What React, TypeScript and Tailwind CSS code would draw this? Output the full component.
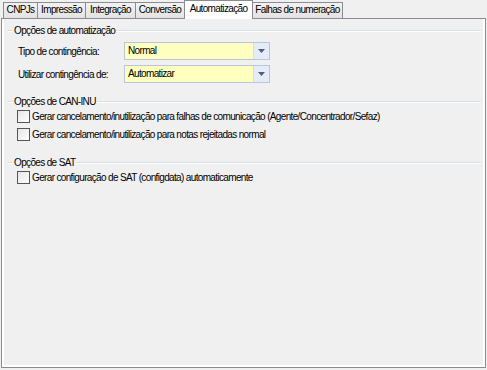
import React from 'react';

const tabs = [
    { t: "CNPJs", w: "w-[35px]" },
    { t: "Impressão", w: "w-[49px]" },
    { t: "Integração", w: "w-[51px]" },
    { t: "Conversão", w: "w-[50px]" },
    { t: "Automatização", w: "w-[69px]" },
    { t: "Falhas de numeração", w: "w-[91px]" },
];

function GroupHeader({ title }: { title: string }) {
    return (
        <div className="flex items-center h-[13px] ml-[4px] mr-[2px]">
            <div className="w-[5px] h-[2px] border-t border-[#d5dfe5] bg-white" />
            <span className="px-px leading-[13px] text-black whitespace-nowrap">{title}</span>
            <div className="flex-1 h-[2px] border-t border-[#d5dfe5] bg-white" />
        </div>
    );
}

function Combo({ value }: { value: string }) {
    return (
        <div className="flex w-[146px] h-[18px] border border-[#b7c7dc] bg-[#ffffc0]">
            <div className="flex-1 pl-[3px] leading-[16px] text-black">{value}</div>
            <div className="w-[16px] flex items-center justify-center bg-[#e4ecf7] border-l border-[#d3dfee]">
                <svg width="7" height="4" viewBox="0 0 7 4">
                    <path d="M0 0 H7 L3.5 4 Z" fill="#4a5f86" />
                </svg>
            </div>
        </div>
    );
}

function Check({ label }: { label: string }) {
    return (
        <div className="flex items-center h-[13px] ml-[13px]">
            <div className="w-[13px] h-[13px] border border-[#555] bg-gradient-to-br from-[#e6e6e6] to-white" />
            <span className="ml-[2px] leading-[13px] text-black whitespace-nowrap">{label}</span>
        </div>
    );
}

export default function App() {
    return (
        <div className="w-[487px] h-[370px] bg-[#f0f0f0] font-['Liberation_Sans',Arial,sans-serif] text-[10px] tracking-[-0.65px] select-none">
            {/* Abas */}
            <div className="flex items-end h-[18px] pl-[3px]">
                {tabs.map(({ t, w }, i) => {
                    const sel = t === "Automatização";
                    return sel ? (
                        <div key={t} className={`${w} relative z-10 h-[19px] -mb-px -ml-px bg-white border border-b-0 border-[#898c95] leading-[16px] text-center text-black whitespace-nowrap`}>
                            {t}
                        </div>
                    ) : (
                        <div key={t} className={`${w} ${i === 0 ? "" : "-ml-px"} h-[16px] bg-gradient-to-b from-[#f2f2f2] to-[#e3e3e3] border border-b-0 border-[#898c95] leading-[14px] text-center text-black whitespace-nowrap`}>
                            {t}
                        </div>
                    );
                })}
            </div>

            {/* Painel */}
            <div className="ml-px w-[485px] h-[350px] border border-[#898c95] bg-[#f0f0f0]">
                <div className="h-full border-2 border-white border-t-0 pt-[5px]">
                    <GroupHeader title="Opções de automatização" />
                    <div className="flex items-center mt-[5px] ml-[14px]">
                        <span className="w-[106px] text-black whitespace-nowrap">Tipo de contingência:</span>
                        <Combo value="Normal" />
                    </div>
                    <div className="flex items-center mt-[5px] ml-[14px]">
                        <span className="w-[106px] text-black whitespace-nowrap">Utilizar contingência de:</span>
                        <Combo value="Automatizar" />
                    </div>

                    <div className="mt-[12px]">
                        <GroupHeader title="Opções de CAN-INU" />
                    </div>
                    <div className="mt-[2px]">
                        <Check label="Gerar cancelamento/inutilização para falhas de comunicação (Agente/Concentrador/Sefaz)" />
                    </div>
                    <div className="mt-[5px]">
                        <Check label="Gerar cancelamento/inutilização para notas rejeitadas normal" />
                    </div>

                    <div className="mt-[15px]">
                        <GroupHeader title="Opções de SAT" />
                    </div>
                    <div className="mt-[2px]">
                        <Check label="Gerar configuração de SAT (configdata) automaticamente" />
                    </div>
                </div>
            </div>
        </div>
    );
}
